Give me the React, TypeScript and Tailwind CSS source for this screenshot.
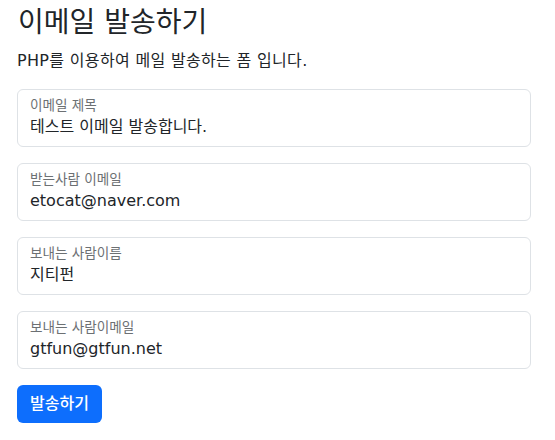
import React from 'react';

interface FieldProps {
  label: string;
  value: string;
}

const Field: React.FC<FieldProps> = ({ label, value }) => {
  return (
    <div className="mb-4 h-[58px] rounded-[6px] border border-[#dee2e6] bg-white px-3">
      <div className="pt-[6px] text-[13.6px] leading-[19px] text-[#6c7073]">{label}</div>
      <div className="text-[16px] leading-[23px] text-[#212529]">{value}</div>
    </div>
  );
};

export default function App() {
  return (
    <div
      className="min-h-screen bg-white pt-[5px] pl-[17px] pr-[24px] text-[#212529]"
      style={{ fontFamily: '"DejaVu Sans", "Noto Sans CJK KR", sans-serif' }}
    >
      <h1 className="mb-2 pl-px text-[28px] leading-[36px] font-normal">이메일 발송하기</h1>
      <p className="mb-4 text-[16px] leading-[24px] tracking-[0.33px]">PHP를 이용하여 메일 발송하는 폼 입니다.</p>

      <form>
        <Field label="이메일 제목" value="테스트 이메일 발송합니다." />
        <Field label="받는사람 이메일" value="etocat@naver.com" />
        <Field label="보내는 사람이름" value="지티펀" />
        <Field label="보내는 사람이메일" value="gtfun@gtfun.net" />
        <button
          type="button"
          className="h-[38px] rounded-[6px] bg-[#0d6efd] px-[13px] text-[16px] font-medium text-white"
        >
          발송하기
        </button>
      </form>
    </div>
  );
}
